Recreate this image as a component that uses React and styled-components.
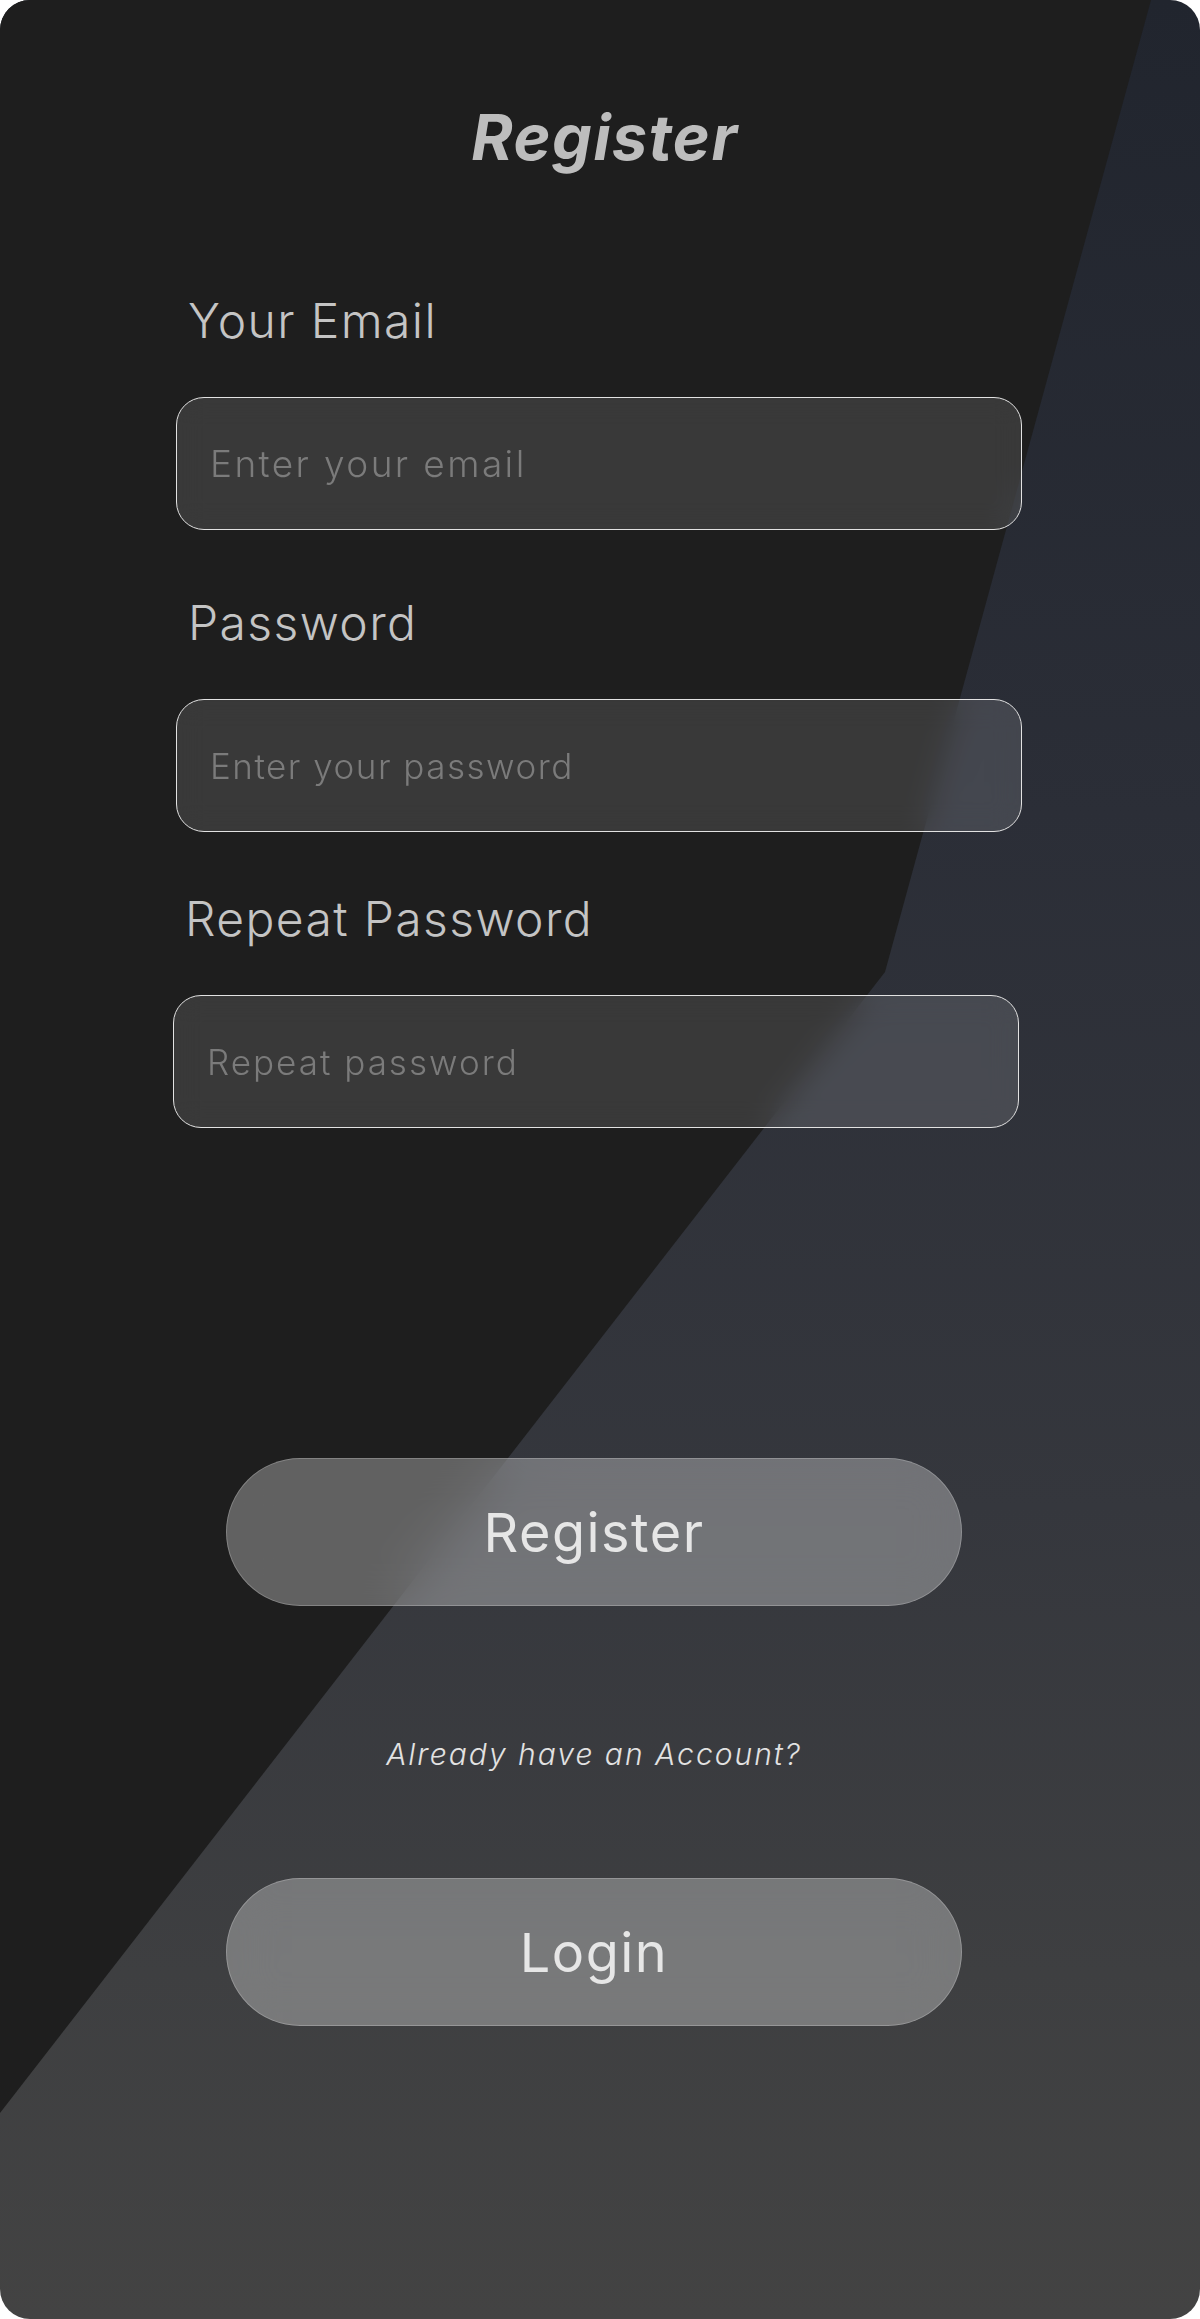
import React from "react";
import styled, { createGlobalStyle } from "styled-components";

const GlobalStyle = createGlobalStyle`
  html, body {
    margin: 0;
    padding: 0;
    background: #ffffff;
  }
  * {
    box-sizing: border-box;
  }
`;

const font = `Inter, "Noto Sans", "Liberation Sans", sans-serif`;

const fields = [
  { label: "Your Email", placeholder: "Enter your email", type: "email", size: 37, spacing: 2.4, shift: 0, top: 128 },
  { label: "Password", placeholder: "Enter your password", type: "password", size: 35, spacing: 1.5, shift: 0, top: 69 },
  { label: "Repeat Password", placeholder: "Repeat password", type: "password", size: 35, spacing: 2, shift: -3, top: 63 },
];

const App = () => {
  return (
    <>
      <GlobalStyle />
      <Card>
        <Title>Register</Title>
        <Form>
          {fields.map((f) => (
            <Field key={f.label} $shift={f.shift} $top={f.top}>
              <Label>{f.label}</Label>
              <Input
                type={f.type}
                placeholder={f.placeholder}
                $size={f.size}
                $spacing={f.spacing}
              />
            </Field>
          ))}
        </Form>
        <Actions>
          <GlassButton>Register</GlassButton>
          <Hint>Already have an Account?</Hint>
          <GlassButton>Login</GlassButton>
        </Actions>
      </Card>
    </>
  );
};

const Card = styled.div`
  position: relative;
  width: 1200px;
  height: 2319px;
  border-radius: 30px;
  overflow: hidden;
  padding-top: 106px;
  font-family: ${font};
  background: linear-gradient(
    180deg,
    #21252e 0%,
    #2b2e37 35%,
    #35373d 65%,
    #3e3f41 85%,
    #434343 100%
  );
  display: flex;
  flex-direction: column;
  align-items: center;

  &::before {
    content: "";
    position: absolute;
    inset: 0;
    background: #1e1e1e;
    clip-path: polygon(0 0, 1151px 0, 885px 972px, 0 2113px);
  }

  & > * {
    position: relative;
  }
`;

const Title = styled.h1`
  margin: 0;
  font-size: 63px;
  line-height: 63px;
  font-weight: 700;
  font-style: italic;
  color: #bdbdbd;
  letter-spacing: 1.5px;
  padding-left: 10px;
`;

const Form = styled.div`
  width: 846px;
  margin-left: -2px;
  display: flex;
  flex-direction: column;
`;

const Field = styled.div`
  margin-top: ${(p) => p.$top}px;
  display: flex;
  flex-direction: column;
  gap: 52px;
  transform: translateX(${(p) => p.$shift}px);
`;

const Label = styled.label`
  padding-left: 12px;
  font-size: 48px;
  line-height: 48px;
  font-weight: 300;
  letter-spacing: 1.4px;
  color: #c4c4c4;
`;

const Input = styled.input`
  width: 100%;
  height: 133px;
  padding: 0 33px;
  border: 1px solid #e2e2e2;
  border-radius: 28px;
  background: rgba(255, 255, 255, 0.12);
  backdrop-filter: blur(14px);
  font-family: ${font};
  font-size: ${(p) => p.$size}px;
  font-weight: 300;
  letter-spacing: ${(p) => p.$spacing}px;
  color: #cfcfcf;
  outline: none;

  &::placeholder {
    color: #7b7b7b;
  }
`;

const Actions = styled.div`
  margin-top: 330px;
  margin-left: -12px;
  display: flex;
  flex-direction: column;
  align-items: center;
`;

const GlassButton = styled.button`
  width: 736px;
  height: 148px;
  border-radius: 74px;
  border: 1px solid rgba(255, 255, 255, 0.22);
  background: rgba(255, 255, 255, 0.3);
  backdrop-filter: blur(24px);
  font-family: ${font};
  font-size: 54px;
  font-weight: 400;
  letter-spacing: 1.5px;
  color: #e6e6e6;
  cursor: pointer;
`;

const Hint = styled.p`
  margin: 133px 0 109px;
  font-size: 30px;
  line-height: 30px;
  font-weight: 300;
  font-style: italic;
  letter-spacing: 2px;
  color: #e2e2e2;
`;

export default App;
